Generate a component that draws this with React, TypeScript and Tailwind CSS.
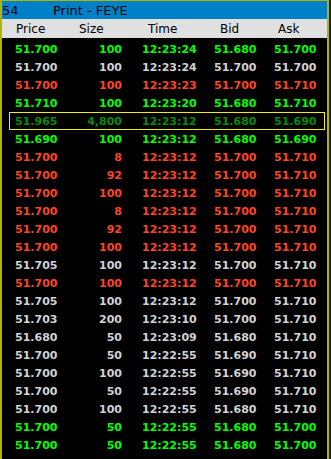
import React from "react";

type Tone = "up" | "flat" | "down" | "hit";

type Print = {
  price: string;
  size: string;
  time: string;
  bid: string;
  ask: string;
  tone: Tone;
};

const prints: Print[] = [
  { price: "51.700", size: "100", time: "12:23:24", bid: "51.680", ask: "51.700", tone: "up" },
  { price: "51.700", size: "100", time: "12:23:24", bid: "51.700", ask: "51.700", tone: "flat" },
  { price: "51.700", size: "100", time: "12:23:23", bid: "51.700", ask: "51.710", tone: "down" },
  { price: "51.710", size: "100", time: "12:23:20", bid: "51.680", ask: "51.710", tone: "up" },
  { price: "51.965", size: "4,800", time: "12:23:12", bid: "51.680", ask: "51.690", tone: "hit" },
  { price: "51.690", size: "100", time: "12:23:12", bid: "51.680", ask: "51.690", tone: "up" },
  { price: "51.700", size: "8", time: "12:23:12", bid: "51.700", ask: "51.710", tone: "down" },
  { price: "51.700", size: "92", time: "12:23:12", bid: "51.700", ask: "51.710", tone: "down" },
  { price: "51.700", size: "100", time: "12:23:12", bid: "51.700", ask: "51.710", tone: "down" },
  { price: "51.700", size: "8", time: "12:23:12", bid: "51.700", ask: "51.710", tone: "down" },
  { price: "51.700", size: "92", time: "12:23:12", bid: "51.700", ask: "51.710", tone: "down" },
  { price: "51.700", size: "100", time: "12:23:12", bid: "51.700", ask: "51.710", tone: "down" },
  { price: "51.705", size: "100", time: "12:23:12", bid: "51.700", ask: "51.710", tone: "flat" },
  { price: "51.700", size: "100", time: "12:23:12", bid: "51.700", ask: "51.710", tone: "down" },
  { price: "51.705", size: "100", time: "12:23:12", bid: "51.700", ask: "51.710", tone: "flat" },
  { price: "51.703", size: "200", time: "12:23:10", bid: "51.700", ask: "51.710", tone: "flat" },
  { price: "51.680", size: "50", time: "12:23:09", bid: "51.680", ask: "51.710", tone: "flat" },
  { price: "51.700", size: "50", time: "12:22:55", bid: "51.690", ask: "51.710", tone: "flat" },
  { price: "51.700", size: "100", time: "12:22:55", bid: "51.690", ask: "51.710", tone: "flat" },
  { price: "51.700", size: "50", time: "12:22:55", bid: "51.690", ask: "51.710", tone: "flat" },
  { price: "51.700", size: "100", time: "12:22:55", bid: "51.680", ask: "51.710", tone: "flat" },
  { price: "51.700", size: "50", time: "12:22:55", bid: "51.680", ask: "51.700", tone: "up" },
  { price: "51.700", size: "50", time: "12:22:55", bid: "51.680", ask: "51.700", tone: "up" },
];

const toneClass: Record<Tone, string> = {
  up: "text-[#00ff00] border-transparent",
  flat: "text-[#d2d2d2] border-transparent",
  down: "text-[#ff4422] border-transparent",
  hit: "text-[#0a8a0a] border-[#f0f000]",
};

export default function App() {
  return (
    <div className="flex h-[459px] w-[331px] bg-[#1c1c00] font-['DejaVu_Sans',sans-serif]">
      <div className="flex h-full w-[329px] flex-col border-t border-l-2 border-r-2 border-[#b4b400] bg-black">
        {/* title bar */}
        <div className="flex h-[18px] shrink-0 items-center bg-[#0080c6] text-[13px] leading-none text-black">
          <span className="w-[14px]">54</span>
          <span className="ml-[37px]">Print - FEYE</span>
        </div>

        {/* column headers */}
        <div className="flex h-[19px] shrink-0 items-center bg-[#e0e0e0] pl-[14px] text-[12px] leading-none text-black">
          <span className="w-[63px]">Price</span>
          <span className="w-[69px]">Size</span>
          <span className="w-[72px]">Time</span>
          <span className="w-[58px]">Bid</span>
          <span>Ask</span>
        </div>

        {/* prints */}
        <div className="flex flex-col pt-[2px]">
          {prints.map((p, i) => (
            <div
              key={i}
              className={`ml-[7px] mr-[2px] flex h-[18px] items-center border pl-[5px] text-[11px] font-bold leading-none ${toneClass[p.tone]}`}
            >
              <span className="w-[60px]">{p.price}</span>
              <span className="w-[47px] text-right">{p.size}</span>
              <span className="ml-[20px] w-[72px]">{p.time}</span>
              <span className="w-[60px]">{p.bid}</span>
              <span>{p.ask}</span>
            </div>
          ))}
        </div>
      </div>
    </div>
  );
}
